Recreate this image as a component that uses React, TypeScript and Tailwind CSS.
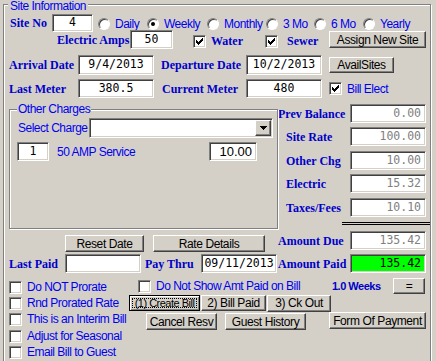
import React from 'react';

const sans = "font-['Liberation_Sans',Arial,sans-serif]";
const serif = "font-['Liberation_Serif','Times_New_Roman',serif] font-bold";
const mono = "font-['DejaVu_Sans_Mono',monospace]";

const sunken =
  'border border-t-[#808080] border-l-[#808080] border-b-white border-r-white shadow-[inset_1px_1px_0_#404040,inset_-1px_-1px_0_#d4d0c8]';
const raised =
  'border border-t-white border-l-white border-b-[#404040] border-r-[#404040] shadow-[inset_-1px_-1px_0_#808080] bg-[#d4d0c8]';
const etched = 'border border-[#808080] shadow-[1px_1px_0_white,inset_1px_1px_0_white]';

function Lbl({ children, className = '' }: { children: React.ReactNode; className?: string }) {
  return (
    <div className={`${serif} text-[12px] leading-none text-[#0000c8] whitespace-nowrap shrink-0 ${className}`}>
      {children}
    </div>
  );
}

function Txt({ children, className = '' }: { children: React.ReactNode; className?: string }) {
  return (
    <div className={`text-[12px] tracking-[-0.5px] leading-none text-[#0000f0] whitespace-nowrap shrink-0 ${className}`}>
      {children}
    </div>
  );
}

function Field({
  value = '',
  className = '',
  right = false,
  gray = false,
  green = false,
  plain = false,
}: {
  value?: string;
  className?: string;
  right?: boolean;
  gray?: boolean;
  green?: boolean;
  plain?: boolean;
}) {
  return (
    <div
      className={`flex items-center shrink-0 px-[4px] leading-none ${sunken} ${green ? 'bg-[#00ff00]' : 'bg-white'} ${
        right ? 'justify-end' : 'justify-center'
      } ${gray ? 'text-[#808080]' : 'text-black'} ${plain ? 'text-[13px]' : `${mono} text-[11.5px]`} ${className}`}
    >
      {value}
    </div>
  );
}

function Btn({ label, className = '' }: { label: string; className?: string }) {
  return (
    <div
      className={`flex items-center justify-center shrink-0 text-[12px] tracking-[-0.4px] leading-none text-black whitespace-nowrap ${raised} ${className}`}
    >
      {label}
    </div>
  );
}

function Check({ checked = false }: { checked?: boolean }) {
  return (
    <div className={`w-[13px] h-[13px] shrink-0 bg-white flex items-center justify-center ${sunken}`}>
      {checked && (
        <svg width="7" height="7" viewBox="0 0 7 7" shapeRendering="crispEdges">
          <path d="M0 2 H1 V3 H2 V4 H3 V3 H4 V2 H5 V1 H6 V0 H7 V3 H6 V4 H5 V5 H4 V6 H3 V7 H2 V6 H1 V5 H0 Z" fill="black" />
        </svg>
      )}
    </div>
  );
}

function Opt({ label, checked = false, className = '' }: { label: string; checked?: boolean; className?: string }) {
  return (
    <div className={`flex items-center shrink-0 ${className}`}>
      <div className="w-[12px] h-[12px] rounded-full bg-white flex items-center justify-center border border-t-[#808080] border-l-[#808080] border-b-white border-r-white shadow-[inset_1px_1px_0_#404040]">
        {checked && <div className="w-[4px] h-[4px] rounded-full bg-black" />}
      </div>
      <Txt className="ml-[5px]">{label}</Txt>
    </div>
  );
}

function MoneyRow({
  label,
  value,
  className = '',
  indent = false,
  green = false,
}: {
  label: string;
  value: string;
  className?: string;
  indent?: boolean;
  green?: boolean;
}) {
  return (
    <div className={`flex items-center h-[19px] ${className}`}>
      <Lbl className={`w-[72px] ${indent ? 'pl-[8px]' : ''}`}>{label}</Lbl>
      <Field className="w-[76px] h-[19px]" value={value} right gray={!green} green={green} />
    </div>
  );
}

export default function App() {
  return (
    <div className={`w-[436px] h-[361px] overflow-hidden bg-[#d4d0c8] pt-[4px] pl-[3px] ${sans}`}>
      <div className={`relative flex flex-col w-[428px] h-[380px] ${etched}`}>
        <span className="absolute left-[4px] -top-[5px] px-[2px] bg-[#d4d0c8] text-[12px] tracking-[-0.5px] leading-none text-[#0000f0]">
          Site Information
        </span>

        {/* site no + billing period */}
        <div className="flex items-center h-[18px] mt-[9px]">
          <Lbl className="ml-[6px] w-[42px]">Site No</Lbl>
          <Field className="w-[41px] h-[18px]" value="4" />
          <div className="flex items-center ml-[5px] mt-[2px]">
            <Opt className="w-[49px]" label="Daily" />
            <Opt className="w-[60px]" label="Weekly" checked />
            <Opt className="w-[59px]" label="Monthly" />
            <Opt className="w-[48px]" label="3 Mo" />
            <Opt className="w-[49px]" label="6 Mo" />
            <Opt label="Yearly" />
          </div>
        </div>

        {/* electric amps / water / sewer */}
        <div className="flex items-center h-[19px] -mt-[2px]">
          <Lbl className="ml-[53px] w-[73px]">Electric Amps</Lbl>
          <Field className="w-[43px] h-[19px]" value="50" />
          <div className="flex items-center ml-[20px] w-[72px] mt-[3px]">
            <Check checked />
            <Lbl className="ml-[5px]">Water</Lbl>
          </div>
          <div className="flex items-center w-[64px] mt-[3px]">
            <Check checked />
            <Lbl className="ml-[9px]">Sewer</Lbl>
          </div>
          <Btn label="Assign New Site" className="w-[97px] h-[17px]" />
        </div>

        {/* dates */}
        <div className="flex items-center h-[20px] mt-[6px]">
          <Lbl className="ml-[5px] w-[69px]">Arrival Date</Lbl>
          <Field className="w-[76px] h-[20px]" value="9/4/2013" />
          <Lbl className="ml-[7px] w-[85px]">Departure Date</Lbl>
          <Field className="w-[76px] h-[20px]" value="10/2/2013" />
          <Btn label="AvailSites" className="ml-[7px] w-[65px] h-[16px]" />
        </div>

        {/* meters */}
        <div className="flex items-center h-[19px] mt-[4px]">
          <Lbl className="ml-[5px] w-[69px]">Last Meter</Lbl>
          <Field className="w-[76px] h-[19px]" value="380.5" />
          <Lbl className="ml-[8px] w-[84px]">Current Meter</Lbl>
          <Field className="w-[76px] h-[19px]" value="480" />
          <div className="flex items-center ml-[7px]">
            <Check checked />
            <Txt className="ml-[5px]">Bill Elect</Txt>
          </div>
        </div>

        {/* charges + totals */}
        <div className="flex mt-[5px]">
          <div className="flex flex-col w-[277px]">
            <div className={`relative flex flex-col mt-[6px] ml-[5px] w-[269px] h-[120px] ${etched}`}>
              <span className="absolute left-[7px] -top-[7px] px-[1px] bg-[#d4d0c8] text-[12px] tracking-[-0.5px] leading-none text-[#0000f0]">
                Other Charges
              </span>
              <div className="flex items-center h-[20px] mt-[8px]">
                <Txt className="ml-[8px] w-[71px]">Select Charge</Txt>
                <div className={`flex justify-end w-[184px] h-[20px] bg-white p-[1px] ${sunken}`}>
                  <div className={`flex items-center justify-center w-[16px] h-[16px] ${raised}`}>
                    <svg width="7" height="4" viewBox="0 0 7 4" shapeRendering="crispEdges">
                      <path d="M0 0 H7 L3.5 4 Z" fill="black" />
                    </svg>
                  </div>
                </div>
              </div>
              <div className="flex items-center h-[19px] mt-[4px]">
                <Field className="ml-[7px] w-[32px] h-[19px]" value="1" />
                <Txt className="ml-[8px] w-[152px]">50 AMP Service</Txt>
                <Field className="w-[48px] h-[19px]" value="10.00" right plain />
              </div>
            </div>

            <div className="flex items-center h-[17px] mt-[6px]">
              <Btn label="Reset Date" className="ml-[61px] w-[79px] h-[17px]" />
              <Btn label="Rate Details" className="ml-[9px] w-[112px] h-[17px]" />
            </div>

            <div className="flex items-center h-[19px] mt-[2px]">
              <Lbl className="ml-[5px] w-[56px]">Last Paid</Lbl>
              <Field className="w-[76px] h-[19px]" />
              <Lbl className="ml-[4px] w-[56px]">Pay Thru</Lbl>
              <Field className="w-[76px] h-[19px]" value="09/11/2013" />
            </div>
          </div>

          <div className="flex flex-col">
            <MoneyRow className="mt-[1px]" label="Prev Balance" value="0.00" />
            <MoneyRow className="mt-[4px]" label="Site Rate" value="100.00" indent />
            <MoneyRow className="mt-[5px]" label="Other Chg" value="10.00" indent />
            <MoneyRow className="mt-[4px]" label="Electric" value="15.32" indent />
            <MoneyRow className="mt-[5px]" label="Taxes/Fees" value="10.10" indent />
            <div className="mt-[5px] ml-[64px] w-[88px] h-[3px] border-y border-black" />
            <MoneyRow className="mt-[6px]" label="Amount Due" value="135.42" />
            <MoneyRow className="mt-[4px]" label="Amount Paid" value="135.42" green />
          </div>
        </div>

        {/* options + actions */}
        <div className="flex">
          <div className="flex flex-col w-[125px] mt-[6px]">
            {['Do NOT Prorate', 'Rnd Prorated Rate', 'This is an Interim Bill', 'Adjust for Seasonal', 'Email Bill to Guest'].map(
              (t, i) => (
                <div key={t} className={`flex items-center h-[16px] ml-[5px] ${i === 3 ? 'mt-[1px]' : ''}`}>
                  <Check />
                  <Txt className="ml-[5px]">{t}</Txt>
                </div>
              ),
            )}
          </div>

          <div className="flex flex-col">
            <div className="flex items-center h-[16px] mt-[5px]">
              <div className="flex items-center ml-[9px] w-[194px]">
                <Check />
                <Txt className="ml-[5px]">Do Not Show Amt Paid on Bill</Txt>
              </div>
              <div className="w-[61px] text-[11px] font-bold leading-none text-[#0000c8] tracking-[-0.5px] whitespace-nowrap">
                1.0 Weeks
              </div>
              <Btn label="=" className="w-[32px] h-[16px]" />
            </div>

            <div className="flex items-center h-[16px] mt-[1px]">
              <div className="flex w-[71px] h-[16px] p-[2px] bg-[#d4d0c8] border border-black shadow-[inset_1px_1px_0_white,inset_-1px_-1px_0_#808080]">
                <div className="flex flex-1 items-center justify-center border border-dotted border-black text-[11px] tracking-[-0.5px] leading-none text-black whitespace-nowrap">
                  (1) Create Bill
                </div>
              </div>
              <Btn label="2) Bill Paid" className="ml-[1px] w-[65px] h-[16px]" />
              <Btn label="3) Ck Out" className="ml-[1px] w-[64px] h-[17px]" />
            </div>

            <div className="flex items-start h-[17px] mt-[2px]">
              <Btn label="Cancel Resv" className="ml-[17px] w-[71px] h-[17px]" />
              <Btn label="Guest History" className="ml-[8px] w-[81px] h-[17px]" />
              <Btn label="Form Of Payment" className="ml-[23px] w-[97px] h-[17px] -mt-[1px]" />
            </div>
          </div>
        </div>
      </div>
    </div>
  );
}
